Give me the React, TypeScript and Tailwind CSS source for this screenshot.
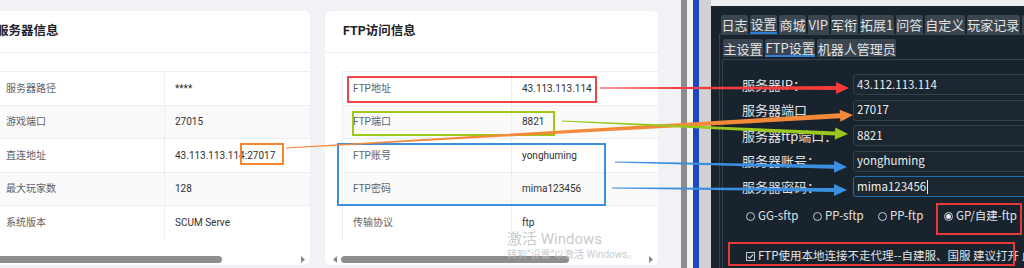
import React from "react";

const SERVER_ROWS = [
  ["服务器路径", "****"],
  ["游戏端口", "27015"],
  ["直连地址", "43.113.113.114:27017"],
  ["最大玩家数", "128"],
  ["系统版本", "SCUM Serve"],
];

const FTP_ROWS = [
  ["FTP地址", "43.113.113.114"],
  ["FTP端口", "8821"],
  ["FTP账号", "yonghuming"],
  ["FTP密码", "mima123456"],
  ["传输协议", "ftp"],
];

const TABS = ["日志", "设置", "商城", "VIP", "军衔", "拓展1", "问答", "自定义", "玩家记录"];
const SUB_TABS = ["主设置", "FTP设置", "机器人管理员"];

const FORM_ROWS = [
  { label: "服务器IP：", value: "43.112.113.114" },
  { label: "服务器端口", value: "27017" },
  { label: "服务器ftp端口：", value: "8821" },
  { label: "服务器账号：", value: "yonghuming" },
  { label: "服务器密码：", value: "mima123456", focused: true },
];

const RADIOS = [
  { label: "GG-sftp", w: "w-[67px]" },
  { label: "PP-sftp", w: "w-[65px]" },
  { label: "PP-ftp", w: "w-[66px]" },
  { label: "GP/自建-ftp", w: "w-[80px]", checked: true },
];

// annotation arrows: start, tip, colour, widest shaft
const ARROWS = [
  { x1: 286, y1: 148, x2: 853, y2: 115, color: "#f5893a", w: 5 },
  { x1: 600, y1: 88, x2: 849, y2: 88, color: "#f53b3b", w: 4 },
  { x1: 562, y1: 121, x2: 848, y2: 134, color: "#9ac81d", w: 4 },
  { x1: 615, y1: 162, x2: 847, y2: 167, color: "#3b8fe0", w: 4 },
  { x1: 612, y1: 188, x2: 847, y2: 190, color: "#3b8fe0", w: 4 },
];

function arrowPoints(x1: number, y1: number, x2: number, y2: number, w: number) {
  const head = 13;
  const headW = 12;
  const dx = x2 - x1;
  const dy = y2 - y1;
  const len = Math.hypot(dx, dy);
  const ux = dx / len;
  const uy = dy / len;
  const nx = -uy;
  const ny = ux;
  const bx = x2 - ux * head;
  const by = y2 - uy * head;
  const pts = [
    [x1 + nx * 0.5, y1 + ny * 0.5],
    [bx + (nx * w) / 2, by + (ny * w) / 2],
    [bx + (nx * headW) / 2, by + (ny * headW) / 2],
    [x2, y2],
    [bx - (nx * headW) / 2, by - (ny * headW) / 2],
    [bx - (nx * w) / 2, by - (ny * w) / 2],
    [x1 - nx * 0.5, y1 - ny * 0.5],
  ];
  return pts.map((p) => p.join(",")).join(" ");
}

function ScrollArrow({ dir }: { dir: "left" | "right" }) {
  return (
    <svg width="4" height="7" viewBox="0 0 4 7" className="shrink-0">
      <path d={dir === "left" ? "M4 0 L0 3.5 L4 7 Z" : "M0 0 L4 3.5 L0 7 Z"} fill="#8a8a8a" />
    </svg>
  );
}

function InfoCard({ title, rows, className }: { title: string; rows: string[][]; className: string }) {
  return (
    <div className={`flex h-[254px] shrink-0 flex-col overflow-hidden rounded-md bg-white ${className}`}>
      <div className="flex h-[42px] shrink-0 items-center border-b border-[#ebeef5] px-[18px] text-[12.5px] font-bold text-[#1f2329]">
        {title}
      </div>
      <div className="ml-[17px] mt-[18px] border-l border-t border-[#ebeef5]">
        {rows.map(([label, value], i) => (
          <div
            key={label}
            className={`grid h-[33.5px] grid-cols-[169px_1fr] ${i < rows.length - 1 ? "border-b border-[#ebeef5]" : ""} ${i % 2 === 1 ? "bg-[#fafafa]" : "bg-white"}`}
          >
            <div className="flex items-center border-r border-[#ebeef5] px-[10px] text-[10px] text-[#606266]">{label}</div>
            <div className="flex items-center px-[10px] text-[10px] text-[#303133]">{value}</div>
          </div>
        ))}
      </div>
      <div className="flex-1" />
      <div className="flex h-[12px] shrink-0 items-center gap-[4px] pl-[8px] pr-[5px]">
        <ScrollArrow dir="left" />
        <div className="flex-1">
          <div className="h-[7px] w-[228px] rounded-full bg-[#8e8e8e]" />
        </div>
        <ScrollArrow dir="right" />
      </div>
    </div>
  );
}

function Radio({ checked }: { checked?: boolean }) {
  return (
    <span className="flex h-[9px] w-[9px] shrink-0 items-center justify-center rounded-full border border-[#c9ccd0]">
      {checked && <span className="h-[5px] w-[5px] rounded-full bg-[#e6e7e9]" />}
    </span>
  );
}

export default function App() {
  return (
    <div className="relative flex h-[268px] w-[1024px] overflow-hidden font-[Roboto,'Noto_Sans_CJK_SC',sans-serif]">
      {/* web page */}
      <div className="flex h-full w-[681px] shrink-0 items-start gap-[15px] overflow-hidden bg-[#f0f2f5] pt-[11px]">
        <InfoCard title="服务器信息" rows={SERVER_ROWS} className="ml-[-22px] w-[332px]" />
        <InfoCard title="FTP访问信息" rows={FTP_ROWS} className="w-[333px]" />
      </div>

      {/* window edges */}
      <div className="w-[6px] shrink-0 bg-[#8c8c8c]" />
      <div className="w-[6px] shrink-0 bg-[#f2f2f2]" />
      <div className="w-[6px] shrink-0 bg-[#1d47c0]" />
      <div className="w-[12px] shrink-0 bg-[#d2d2d2]" />

      {/* desktop app */}
      <div className="flex h-full flex-1 flex-col overflow-hidden bg-[#19232d] font-['Noto_Sans_CJK_SC',sans-serif] text-[#e2e3e5]">
        <div className="h-[6px] shrink-0 bg-[#eceef0]" />
        <div className="flex flex-1 flex-col pl-[8px] pt-[9px]">
          <div className="flex h-[19px] shrink-0 gap-[2px] pl-[2px]">
            {TABS.map((t) => (
              <div
                key={t}
                className={`flex shrink-0 items-center rounded-t-[2px] bg-[#3a4550] px-[0.5px] text-[13px] leading-none ${t === "设置" ? "border-b-2 border-[#2f7fd3]" : ""}`}
              >
                {t}
              </div>
            ))}
            <div className="w-[20px] shrink-0 rounded-t-[2px] bg-[#3a4550]" />
          </div>
          <div className="flex flex-1 flex-col border-l border-t border-[#32414b] pl-[2px] pt-[4px]">
            <div className="ml-[1px] flex h-[18px] shrink-0 gap-[2px]">
              {SUB_TABS.map((t) => (
                <div
                  key={t}
                  className={`flex shrink-0 items-center rounded-t-[2px] bg-[#3a4550] px-[0.5px] text-[13px] leading-none ${t === "FTP设置" ? "border-b-2 border-[#2f7fd3]" : ""}`}
                >
                  {t}
                </div>
              ))}
            </div>
            <div className="mt-[2px] flex flex-1 flex-col border-l border-t border-[#32414b] pl-[19px] pt-[14px]">
              <div className="flex flex-col gap-[4.5px]">
                {FORM_ROWS.map((r) => (
                  <div key={r.label} className="flex h-[21px] items-center">
                    <div className="w-[111px] shrink-0 text-[13px]">{r.label}</div>
                    <div
                      className={`flex h-full w-[200px] shrink-0 items-center rounded-[3px] border bg-[#1b262f] px-[3px] text-[11.5px] text-[#eceef0] ${r.focused ? "border-[#1f6db5]" : "border-[#32414b]"}`}
                    >
                      {r.value}
                      {r.focused && <span className="ml-[1px] h-[14px] w-px bg-[#eceef0]" />}
                    </div>
                  </div>
                ))}
              </div>
              <div className="mt-[9px] flex h-[20px] items-center pl-[4px] text-[11.5px]">
                {RADIOS.map((r) => (
                  <div key={r.label} className={`flex shrink-0 items-center gap-[3px] ${r.w}`}>
                    <Radio checked={r.checked} />
                    <span className="whitespace-nowrap">{r.label}</span>
                  </div>
                ))}
              </div>
              <div className="mt-[20px] flex h-[20px] items-center gap-[3px] whitespace-nowrap pl-[4px] text-[11.5px]">
                <svg width="9" height="9" viewBox="0 0 9 9" className="shrink-0">
                  <rect x="0.5" y="0.5" width="8" height="8" fill="none" stroke="#c9ccd0" />
                  <path d="M2 4.6 L3.8 6.3 L7 2.6" fill="none" stroke="#e6e7e9" strokeWidth="1.1" />
                </svg>
                <span>FTP使用本地连接不走代理--自建服、国服 建议打开 此项</span>
              </div>
            </div>
          </div>
        </div>
      </div>

      {/* annotation boxes */}
      <div className="pointer-events-none absolute left-[240px] top-[143px] h-[22px] w-[44px] border-2 border-[#f5862e]" />
      <div className="pointer-events-none absolute left-[347px] top-[76px] h-[27px] w-[250px] border-2 border-[#f04848]" />
      <div className="pointer-events-none absolute left-[352px] top-[111px] h-[25px] w-[203px] border-2 border-[#9cc916]" />
      <div className="pointer-events-none absolute left-[337px] top-[143px] h-[63px] w-[269px] border-2 border-[#3d8fe0]" />
      <div className="pointer-events-none absolute left-[936px] top-[203px] h-[32px] w-[86px] border-2 border-[#e8393b]" />
      <div className="pointer-events-none absolute left-[728px] top-[242px] h-[24px] w-[287px] border-2 border-[#e8393b]" />

      {/* annotation arrows */}
      <svg className="pointer-events-none absolute left-0 top-0" width="1024" height="268">
        {ARROWS.map((a, i) => (
          <polygon key={i} points={arrowPoints(a.x1, a.y1, a.x2, a.y2, a.w)} fill={a.color} />
        ))}
      </svg>

      {/* activation watermark */}
      <div className="pointer-events-none absolute left-[507px] top-[230px] flex flex-col text-[#b9bcc0]/80">
        <span className="text-[15px] leading-[18px]">激活 Windows</span>
        <span className="text-[10px] leading-[14px]">转到“设置”以激活 Windows。</span>
      </div>
    </div>
  );
}
